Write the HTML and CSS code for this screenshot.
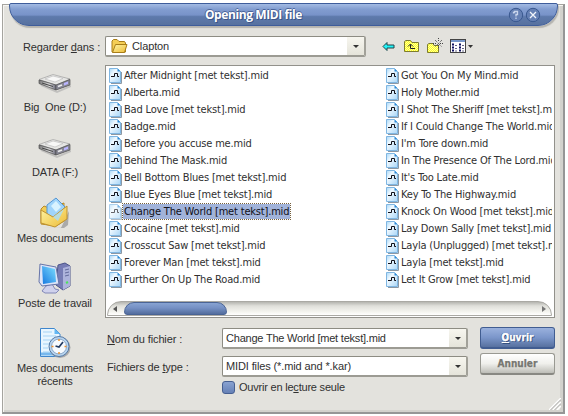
FILE: index.html
```html
<!DOCTYPE html>
<html lang="fr">
<head>
<meta charset="utf-8">
<title>Opening MIDI file</title>
<link rel="stylesheet" href="styles.css">
</head>
<body>
<svg class="defs" width="0" height="0">
  <defs>
    <linearGradient id="paper" x1="0" y1="0" x2="1" y2="1"><stop offset="0" stop-color="#a9d8f8"/><stop offset=".35" stop-color="#f0f9ff"/><stop offset="1" stop-color="#a9d6f7"/></linearGradient>
    <linearGradient id="gold" x1="0" y1="0" x2="1" y2="1"><stop offset="0" stop-color="#fff6a8"/><stop offset="1" stop-color="#edbb35"/></linearGradient>
    <linearGradient id="screen" x1="0" y1="1" x2="1" y2="0"><stop offset="0" stop-color="#1678e0"/><stop offset="1" stop-color="#7fe0ff"/></linearGradient>
    <linearGradient id="metal" x1="0" y1="0" x2="1" y2="0"><stop offset="0" stop-color="#777"/><stop offset=".6" stop-color="#ddd"/><stop offset="1" stop-color="#667"/></linearGradient>
    <pattern id="dither" width="2" height="2" patternUnits="userSpaceOnUse"><rect width="2" height="2" fill="#ffff20"/><rect width="1" height="1" fill="#ffffa0"/><rect x="1" y="1" width="1" height="1" fill="#ffffa0"/></pattern>
    <symbol id="midi" viewBox="0 0 13 16">
      <path d="M2 15.5H12.5V4" fill="none" stroke="#8c98a4"/>
      <path d="M.5.5H8.5L11.5 3.5V14.5H.5Z" fill="url(#paper)" stroke="#7fb6e2"/>
      <path d="M8.5.5V3.5H11.5Z" fill="#2f8bd8"/>
      <path d="M2 8.500H5.500V5.500H8.500V8.500H10" fill="none" stroke="#101018"/>
    </symbol>
    <symbol id="drive" viewBox="0 0 34 20">
      <path d="M2 9L19 17 33 11V13L19 19 3 12Z" fill="#aaa" opacity=".6"/>
      <path d="M1 6L14 1 32 5V11L18 16 1 9Z" fill="#777"/>
      <path d="M1 5.500L15 .5 32 5 18 11Z" fill="#e6e6e4" stroke="#999" stroke-width=".6"/>
      <path d="M7 5L15 2 25 4.500 17 8Z" fill="#f8f8f7" stroke="#b8b8b8" stroke-width=".6"/>
      <path d="M1 6L18 11V16L1 9.500Z" fill="url(#metal)" stroke="#555" stroke-width=".7"/>
      <path d="M18 11L32 5.500V11L18 16Z" fill="#888896" stroke="#555" stroke-width=".7"/>
      <path d="M4 9L15 12.500" stroke="#444"/><path d="M26 9L30 7.500V10L26 11.500Z" fill="#b9b4ff"/>
      <path d="M20 12.500L24 11" stroke="#eee" stroke-width="1.500"/>
    </symbol>
  </defs>
</svg>
<div class="window">
  <header class="titlebar">
    <span></span>
    <h1>Opening MIDI file</h1>
    <div class="controls">
      <svg width="34" height="16" viewBox="0 0 34 16"><circle cx="8" cy="8" r="6.700" fill="#6580b4" stroke="#39588f"/><path d="M5.500 6.500V5.500H6.500V4.500H9.500V7.500H8V9.500M8 10.500V12" fill="none" stroke="#c9d5ec" stroke-width="1.300"/><circle cx="25" cy="8" r="6.700" fill="#6580b4" stroke="#39588f"/><path d="M22 5L28 11M28 5L22 11" stroke="#f2f5fb" stroke-width="1.300"/></svg>
    </div>
  </header>
  <div class="lookup">
    <label class="sans lookin">Regarder <u>d</u>ans :</label>
    <div class="combo folder-combo">
      <svg width="17" height="15" viewBox="0 0 17 15"><path d="M1 13V2L2.500.5H6L8 2.500H13.500L14.500 4V13Z" fill="#f5ce55" stroke="#a87d18"/><path d="M1.500 13.500L4.500 5.500H16L13.500 13.500Z" fill="url(#gold)" stroke="#a87d18"/></svg>
      <span class="sans">Clapton</span><i class="arrow"></i>
    </div>
    <svg class="tools" width="94" height="18" viewBox="0 0 94 18">
      <path d="M1 8.500L5 4.500V7H12V10H5V12.500Z" fill="#20f4f8" stroke="#224448"/>
      <path d="M22.500 13.500V3.500L24 2.500H28.500L30 4.500H36.500V13.500Z" fill="url(#dither)" stroke="#7d7c30"/><path d="M26 8.500L28.500 6 31 8.500M28.500 6.500V10.500H33" fill="none" stroke="#202020"/>
      <path d="M45.500 14.500V6.500L47 5.500H51L52 7.500H56.500V14.500Z" fill="url(#dither)" stroke="#7d7c30"/>
      <path d="M53 2L60 9M60 2L53 9M56.500 0V4M56.500 7V11M51 5.500H55M58 5.500H61" stroke="#444" stroke-dasharray="1 1"/>
      <rect x="68.500" y="1.500" width="15" height="13" fill="#fff" stroke="#444"/><rect x="69" y="2" width="14" height="2" fill="#7898c9"/>
      <path d="M70 6.500H72M70 9.500H72M70 12.500H72M77 6.500H79M77 9.500H79M77 12.500H79" stroke="#101060" stroke-width="2"/><path d="M73 7.500H75M73 10.500H75M73 13H75M80 7.500H82M80 10.500H82M80 13H82" stroke="#666688"/>
      <path d="M86 7H91L88.500 10Z" fill="#333"/>
    </svg>
  </div>
  <div class="main">
    <nav class="places">
      <div class="place"><svg width="34" height="20"><use href="#drive"/></svg><span class="sans">Big&nbsp; One (D:)</span></div>
      <div class="place"><svg width="34" height="20"><use href="#drive"/></svg><span class="sans">DATA (F:)</span></div>
      <div class="place docs"><svg width="32" height="32" viewBox="0 0 32 32">
        <path d="M3 30L22 31 30 14 29 28 25 31Z" fill="#aaa"/>
        <path d="M2 12L5 9 10 11 25 6V24L17 29 2 27Z" fill="#f2cd57" stroke="#b88b28"/>
        <path d="M8 8L17 1 26 10 17 22 8 18Z" fill="#9fd4fb" stroke="#5696d2"/><path d="M12 9L17 4 22 10 17 15Z" fill="#d9f3ff"/>
        <path d="M2 13L14 20 28 9V22L16 30 2 26Z" fill="url(#gold)" stroke="#bf9330"/><path d="M14 20L25 12 19 24Z" fill="#a9ddfb" opacity=".8"/>
      </svg><span class="sans">Mes documents</span></div>
      <div class="place pc"><svg width="34" height="32" viewBox="0 0 34 32">
        <path d="M20 3L27 1 32 4V24L25 28 18 23Z" fill="#767cb5" stroke="#4c5489"/><path d="M25 6L32 4V24L25 28Z" fill="#adb3dc"/><path d="M27 8L31 7M27 11L31 10M27 14L31 13" stroke="#626a9b"/><path d="M28 21L30 20" stroke="#4be35c" stroke-width="2"/>
        <path d="M8 24L14 22 17 27 21 28 18 31H7L4 29Z" fill="#cfd1ec" stroke="#8288b8"/>
        <path d="M2 2L18 5 21 22 4 24 1 20Z" fill="#dce4f8" stroke="#6674a8"/><path d="M4 4L17 7 18 20 5 22Z" fill="url(#screen)"/>
      </svg><span class="sans">Poste de travail</span></div>
      <div class="place recent"><svg width="32" height="32" viewBox="0 0 32 32">
        <path d="M1.500 1.500H15.500L21 7V29.500H1.500Z" fill="#e8f6ff" stroke="#3f86cc"/><path d="M15.500 1.500V7H21Z" fill="#63b7f3"/><path d="M4 5H13M4 9H17M4 13H12M4 17H10M4 21H9M4 25H11" stroke="#a5d3f5"/><path d="M2 27H20" stroke="#77b8ed" stroke-width="3"/>
        <circle cx="21" cy="20.500" r="10.500" fill="#aaa"/><circle cx="20" cy="19.500" r="10" fill="#b9d5ef" stroke="#5379a6"/><circle cx="20" cy="19.500" r="7.500" fill="#f7fbff" stroke="#8ba8c8"/><path d="M20 12V14M20 25V27M12.500 19.500H14.500M25.500 19.500H27.500" stroke="#ec902e" stroke-width="1.500"/><path d="M16.500 19L20 20 24 15" fill="none" stroke="#223a61" stroke-width="1.700"/>
      </svg><span class="sans">Mes documents</span><span class="sans">récents</span></div>
    </nav>
    <div class="content">
      <div class="list">
        <div class="columns">
          <ul class="files">
            <li><svg><use href="#midi"/></svg><span>After Midnight [met tekst].mid</span></li>
            <li><svg><use href="#midi"/></svg><span>Alberta.mid</span></li>
            <li><svg><use href="#midi"/></svg><span>Bad Love [met tekst].mid</span></li>
            <li><svg><use href="#midi"/></svg><span>Badge.mid</span></li>
            <li><svg><use href="#midi"/></svg><span>Before you accuse me.mid</span></li>
            <li><svg><use href="#midi"/></svg><span>Behind The Mask.mid</span></li>
            <li><svg><use href="#midi"/></svg><span>Bell Bottom Blues [met tekst].mid</span></li>
            <li><svg><use href="#midi"/></svg><span>Blue Eyes Blue [met tekst].mid</span></li>
            <li class="selected"><svg><use href="#midi"/></svg><span>Change The World [met tekst].mid</span></li>
            <li><svg><use href="#midi"/></svg><span>Cocaine [met tekst].mid</span></li>
            <li><svg><use href="#midi"/></svg><span>Crosscut Saw [met tekst].mid</span></li>
            <li><svg><use href="#midi"/></svg><span>Forever Man [met tekst].mid</span></li>
            <li><svg><use href="#midi"/></svg><span>Further On Up The Road.mid</span></li>
          </ul>
          <ul class="files">
            <li><svg><use href="#midi"/></svg><span>Got You On My Mind.mid</span></li>
            <li><svg><use href="#midi"/></svg><span>Holy Mother.mid</span></li>
            <li><svg><use href="#midi"/></svg><span>I Shot The Sheriff [met tekst].mid</span></li>
            <li><svg><use href="#midi"/></svg><span>If I Could Change The World.mid</span></li>
            <li><svg><use href="#midi"/></svg><span>I'm Tore down.mid</span></li>
            <li><svg><use href="#midi"/></svg><span>In The Presence Of The Lord.mid</span></li>
            <li><svg><use href="#midi"/></svg><span>It's Too Late.mid</span></li>
            <li><svg><use href="#midi"/></svg><span>Key To The Highway.mid</span></li>
            <li><svg><use href="#midi"/></svg><span>Knock On Wood [met tekst].mid</span></li>
            <li><svg><use href="#midi"/></svg><span>Lay Down Sally [met tekst].mid</span></li>
            <li><svg><use href="#midi"/></svg><span>Layla (Unplugged) [met tekst].mid</span></li>
            <li><svg><use href="#midi"/></svg><span>Layla [met tekst].mid</span></li>
            <li><svg><use href="#midi"/></svg><span>Let It Grow [met tekst].mid</span></li>
          </ul>
        </div>
        <div class="scrollbar"><i class="left"></i><b></b><i class="right"></i></div>
      </div>
      <div class="form">
        <div class="fields">
          <label class="sans"><u>N</u>om du fichier :</label><div class="combo"><span class="sans value">Change The World [met tekst].mid</span><i class="arrow"></i></div>
          <label class="sans">Fichiers de <u>t</u>ype :</label><div class="combo"><span class="sans">MIDI files (*.mid and *.kar)</span><i class="arrow"></i></div>
          <span></span><div class="check"><i></i><span class="sans value">Ouvrir en le<u>c</u>ture seule</span></div>
        </div>
        <div class="buttons"><button class="primary"><u>O</u>uvrir</button><button>Annuler</button></div>
      </div>
    </div>
  </div>
  <svg class="grip" width="12" height="12"><path d="M0 12L12 0M4 12L12 4M8 12L12 8" stroke="#fff" stroke-width="1.500"/><path d="M1.500 12L12 1.500M5.500 12L12 5.500" stroke="#aaa"/></svg>
</div>
</body>
</html>
```
FILE: styles.css
```css
* { box-sizing: border-box; }
body { margin: 0; width: 568px; height: 416px; overflow: hidden; background: #fff; color: #303030; font: 11px/14px "DejaVu Sans Condensed", "DejaVu Sans", sans-serif; }
.defs { position: absolute; }
.window { position: relative; width: 563px; height: 410px; margin: 4px 0 0 2px; background: #e3e2dd; border: 1px solid #a5a49f; border-right: 2px solid #969696; border-bottom: 2px solid #969696; box-shadow: inset 1px 1px #f7f6f3, inset -3px -2px #d3d2cd; }
.titlebar { display: grid; grid-template-columns: 60px 1fr 120px; align-items: center; width: 549px; height: 23px; margin: -2px 0 0 6px; border: 1px solid #3e5d9b; border-radius: 2px 2px 20px 20px / 2px 2px 20px 20px; background: linear-gradient(#a3bbe3 0, #829dd0 25%, #7893c9 52%, #5e7aac 60%, #57719f 100%); box-shadow: 1px 2px 1px #b5b4af; }
h1 { margin: 0; font: bold 12px/15px "Open Sans", sans-serif; letter-spacing: -.4px; text-align: center; color: #fff; white-space: nowrap; text-shadow: 1px 1px #3b568a, -1px 0 #4b659a, 0 -1px #4b659a; }
.controls { display: flex; justify-content: flex-end; padding-right: 15px; }
.sans { font: 11px/14px "Liberation Sans", sans-serif; letter-spacing: -.12px; white-space: pre; }
.value { letter-spacing: -.21px; }
u { text-decoration-thickness: 1px; text-underline-offset: 1px; }
.lookup { display: flex; align-items: center; height: 21px; margin: 10px 0 0 20px; }
.lookin { width: 82px; flex: none; }
.combo { display: flex; align-items: center; height: 21px; background: #fff; border: 1px solid #8d8c83; border-bottom: 2px solid #9c9b93; border-right: 2px solid #a2a199; border-radius: 2px; padding-left: 3px; overflow: hidden; }
.folder-combo { width: 261px; padding-left: 5px; }
.folder-combo span { margin-left: 4px; }
.arrow { display: flex; align-items: center; justify-content: center; width: 17px; height: 18px; margin-left: auto; background: linear-gradient(#f7f6ef, #e5e4da); }
.arrow::after { content: ""; border: 3px solid transparent; border-top: 3px solid #333; border-bottom: 0; }
.tools { margin-left: 16px; }
.main { display: flex; margin-top: 8px; }
.places { display: flex; flex-direction: column; width: 102px; }
.place { display: flex; flex-direction: column; align-items: center; height: 65px; padding: 9px 0 0 2px; }
.place span { margin-top: 6px; }
.place.docs, .place.pc, .place.recent { padding-top: 2px; }
.place.docs span, .place.pc span, .place.recent span { margin-top: 2px; }
.place.recent { height: 70px; }
.place.recent span + span { margin-top: -1px; }
.content { width: 450px; }
.list { height: 253px; display: flex; flex-direction: column; background: #fff; border: 1px solid #92918b; padding: 1px; }
.columns { display: grid; grid-template-columns: 277px 168px; height: 234px; overflow: hidden; }
.files { margin: 0; padding: 0 0 0 2px; list-style: none; overflow: hidden; }
.files li { display: flex; height: 17px; align-items: center; white-space: nowrap; }
.files svg { flex: none; width: 13px; height: 16px; margin-right: 1px; }
.files span { line-height: 15px; padding: 0 1px; letter-spacing: -.18px; }
.files .selected span { background: #a1b3da; color: #101018; outline: 1px dotted #75603d; }
.selected svg { opacity: .65; }
.scrollbar { display: flex; align-items: center; height: 15px; margin: 1px 1px 0 0; border: 1px solid #aaa9a4; border-radius: 14px 14px 0 0; background: linear-gradient(#b5b5b0, #dfdfda 30%, #f4f4ef 75%, #fff); }
.scrollbar b { width: 103px; height: 13px; margin-left: 7px; border: 1px solid #4a6495; border-radius: 10px 10px 3px 3px; background: linear-gradient(#88a3d2, #7590c4 45%, #536d9d); }
.scrollbar i { border: 3px solid transparent; }
.scrollbar .left { margin-left: 5px; border-right: 4px solid #555; border-left: 0; }
.scrollbar .right { margin: 0 5px 0 auto; border-left: 4px solid #777; border-right: 0; }
.form { display: flex; justify-content: space-between; margin-top: 9px; }
.fields { display: grid; grid-template-columns: 115px 246px; grid-template-rows: 21px 21px 14px; row-gap: 7px; padding: 1px 0 0 2px; align-items: center; }
.check { display: flex; align-items: center; margin-top: -8px; }
.check i { width: 13px; height: 13px; border: 1px solid #465f91; border-radius: 3px; background: linear-gradient(#89a2d1, #6681b6); margin-right: 4px; }
.buttons { display: flex; flex-direction: column; gap: 4px; }
button { width: 75px; height: 22px; padding: 0; border: 1px solid #999992; border-bottom: 2px solid #888882; border-radius: 3px; background: linear-gradient(#fff, #f0f0ec 50%, #bdbdb7); color: #777771; font: bold 10px/16px "DejaVu Sans Condensed", sans-serif; -webkit-text-stroke: .25px; }
.primary { border-color: #415d91; background: linear-gradient(#9ab1dd, #7b96ca 50%, #57719f); color: #fff; text-shadow: 1px 1px #36517f, -1px 0 #4b659a; }
.grip { position: absolute; right: 2px; bottom: 2px; }
```
